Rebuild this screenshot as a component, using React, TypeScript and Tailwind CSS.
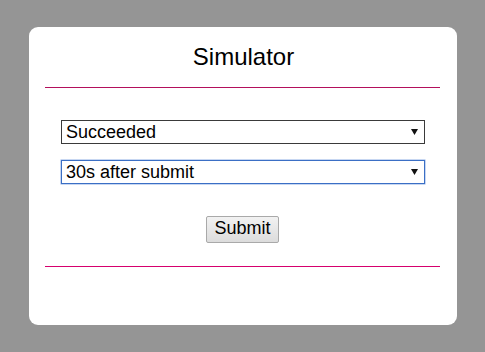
import React, { useState } from 'react';

function Dropdown({
  value,
  options,
  focused,
  onChange,
}:{
  value: string,
  options: string[],
  focused?: boolean,
  onChange: (v:string)=>void,
}): React.ReactElement {
  return (
    <div className="relative w-[364px] h-[24px]">
      <select
        value={value}
        onChange={e=>onChange(e.target.value)}
        className={`
          appearance-none w-full h-full bg-white pl-[4px] pr-[20px] text-[18px] leading-[20px] text-black outline-none
          ${focused ? 'border border-[#3b6fc5] shadow-[0_0_0_0.5px_#8fb0e6]' : 'border border-[#3a3a3a]'}
        `}
      >
        { options.map(o=>(<option key={o} value={o}>{o}</option>)) }
      </select>
      <svg className="absolute right-[7px] top-[9px] pointer-events-none" width="7" height="6" viewBox="0 0 7 6">
        <path d="M0 0 H7 L3.5 6 Z" fill="#111"/>
      </svg>
    </div>
  )
}

export default function App(): React.ReactElement {
  const [ status, setStatus ] = useState("Succeeded");
  const [ delay, setDelay ] = useState("30s after submit");

  return (
    <div className="w-[485px] h-[352px] bg-[#959595] pt-[27px] font-['Liberation_Sans',Arial,sans-serif]">
      <div className="ml-[29px] w-[428px] h-[298px] bg-white rounded-[9px] px-[16px] pt-[15px]">
        <h1 className="text-center text-[24px] leading-[30px] text-black ml-[1px]">Simulator</h1>
        <div className="mt-[15px] h-px w-[395px] bg-[#b3105c]"/>
        <div className="flex flex-col gap-[16px] pl-[16px] pt-[32px]">
          <Dropdown value={status} options={["Succeeded","Failed","Pending"]} onChange={setStatus}/>
          <Dropdown value={delay} options={["Immediately","10s after submit","30s after submit","60s after submit"]} focused onChange={setDelay}/>
        </div>
        <div className="flex justify-center pt-[32px] pr-[1px]">
          <button className="w-[73px] h-[27px] pb-[3px] border border-[#a9a9a9] bg-gradient-to-b from-[#f2f2f2] to-[#dcdcdc] rounded-[2px] text-[18px] leading-[20px] text-black">
            Submit
          </button>
        </div>
        <div className="mt-[23px] h-px w-[395px] bg-[#d6006e]"/>
      </div>
    </div>
  )
}
